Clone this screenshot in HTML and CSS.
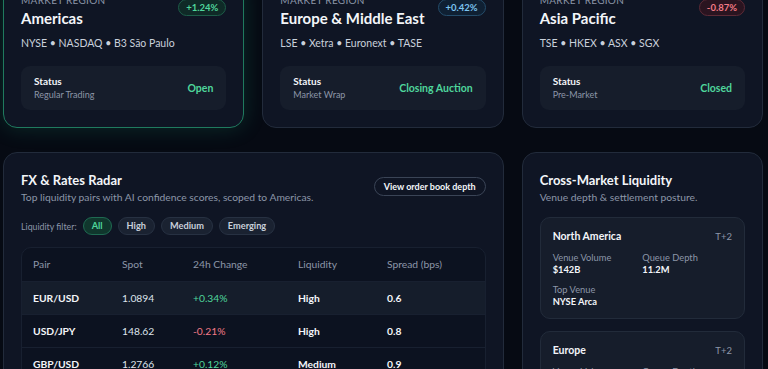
FILE: index.html
```html
<!DOCTYPE html>
<html lang="en">
<head>
    <meta charset="UTF-8" />
    <meta name="viewport" content="width=device-width, initial-scale=1" />
    <title>Global Markets Desk</title>
    <link rel="stylesheet" href="styles.css">
</head>
<body>
    <main class="page">
        <section class="regions">
            <div class="region-card active">
                <div class="region-head">
                    <div>
                        <p class="eyebrow">Market Region</p>
                        <h2 class="region-name">Americas</h2>
                    </div>
                    <span class="badge up">+1.24%</span>
                </div>
                <p class="venues">NYSE • NASDAQ • B3 São Paulo</p>
                <div class="status-box">
                    <div>
                        <div class="status-label">Status</div>
                        <div class="status-sub">Regular Trading</div>
                    </div>
                    <span class="status-value">Open</span>
                </div>
            </div>
            <div class="region-card">
                <div class="region-head">
                    <div>
                        <p class="eyebrow">Market Region</p>
                        <h2 class="region-name">Europe &amp; Middle East</h2>
                    </div>
                    <span class="badge info">+0.42%</span>
                </div>
                <p class="venues">LSE • Xetra • Euronext • TASE</p>
                <div class="status-box">
                    <div>
                        <div class="status-label">Status</div>
                        <div class="status-sub">Market Wrap</div>
                    </div>
                    <span class="status-value">Closing Auction</span>
                </div>
            </div>
            <div class="region-card">
                <div class="region-head">
                    <div>
                        <p class="eyebrow">Market Region</p>
                        <h2 class="region-name">Asia Pacific</h2>
                    </div>
                    <span class="badge down">-0.87%</span>
                </div>
                <p class="venues">TSE • HKEX • ASX • SGX</p>
                <div class="status-box">
                    <div>
                        <div class="status-label">Status</div>
                        <div class="status-sub">Pre-Market</div>
                    </div>
                    <span class="status-value">Closed</span>
                </div>
            </div>
        </section>

        <section class="lower">
            <div class="panel radar">
                <div class="panel-head">
                    <div>
                        <h3 class="panel-title">FX &amp; Rates Radar</h3>
                        <p class="panel-sub">Top liquidity pairs with AI confidence scores, scoped to Americas.</p>
                    </div>
                    <button class="btn-ghost">View order book depth</button>
                </div>
                <div class="filters">
                    <span class="filter-label">Liquidity filter:</span>
                    <button class="chip selected">All</button>
                    <button class="chip">High</button>
                    <button class="chip">Medium</button>
                    <button class="chip">Emerging</button>
                </div>
                <div class="table-wrap">
                    <table>
                        <thead>
                            <tr>
                                <th class="c-pair">Pair</th>
                                <th class="c-spot">Spot</th>
                                <th class="c-chg">24h Change</th>
                                <th class="c-liq">Liquidity</th>
                                <th>Spread (bps)</th>
                            </tr>
                        </thead>
                        <tbody>
                            <tr class="hl">
                                <td class="pair">EUR/USD</td>
                                <td>1.0894</td>
                                <td class="pos">+0.34%</td>
                                <td class="strong">High</td>
                                <td class="strong">0.6</td>
                            </tr>
                            <tr>
                                <td class="pair">USD/JPY</td>
                                <td>148.62</td>
                                <td class="neg">-0.21%</td>
                                <td class="strong">High</td>
                                <td class="strong">0.8</td>
                            </tr>
                            <tr>
                                <td class="pair">GBP/USD</td>
                                <td>1.2766</td>
                                <td class="pos">+0.12%</td>
                                <td class="strong">Medium</td>
                                <td class="strong">0.9</td>
                            </tr>
                        </tbody>
                    </table>
                </div>
            </div>

            <div class="panel liquidity">
                <h3 class="panel-title">Cross-Market Liquidity</h3>
                <p class="panel-sub">Venue depth &amp; settlement posture.</p>
                <div class="venue-card">
                    <div class="venue-head">
                        <span class="venue-name">North America</span>
                        <span class="settle">T+2</span>
                    </div>
                    <div class="stats">
                        <div>
                            <div class="stat-label">Venue Volume</div>
                            <div class="stat-value">$142B</div>
                        </div>
                        <div>
                            <div class="stat-label">Queue Depth</div>
                            <div class="stat-value">11.2M</div>
                        </div>
                        <div>
                            <div class="stat-label">Top Venue</div>
                            <div class="stat-value">NYSE Arca</div>
                        </div>
                    </div>
                </div>
                <div class="venue-card">
                    <div class="venue-head">
                        <span class="venue-name">Europe</span>
                        <span class="settle">T+2</span>
                    </div>
                    <div class="stats">
                        <div>
                            <div class="stat-label">Venue Volume</div>
                            <div class="stat-value">$118B</div>
                        </div>
                        <div>
                            <div class="stat-label">Queue Depth</div>
                            <div class="stat-value">9.4M</div>
                        </div>
                    </div>
                </div>
            </div>
        </section>
    </main>
</body>
</html>
```

FILE: styles.css
```css
:root {
    --bg: #060a13;
    --card: #0f1524;
    --card-border: #222b3b;
    --inner: #161d2b;
    --text: #f3f5f9;
    --muted: #8c96a8;
    --soft: #c9d0db;
    --green: #4fd69c;
    --red: #f27a86;
    --blue: #7cc4f0;
}
* {
    margin: 0;
    padding: 0;
    box-sizing: border-box;
    font-family: 'Lato', 'Noto Sans', sans-serif;
}
body {
    background-color: var(--bg);
    color: var(--text);
    overflow: hidden;
}
.page {
    width: 760px;
    margin: -25px 0 0 3px;
}
/* Region cards */
.regions {
    display: grid;
    grid-template-columns: repeat(3, 1fr);
    gap: 18px;
}
.region-card {
    background-color: var(--card);
    border: 1px solid var(--card-border);
    border-radius: 14px;
    padding: 17px;
}
.region-card.active {
    border-color: #1f7a5e;
    box-shadow: 0 0 22px rgba(40, 200, 150, 0.18);
}
.region-head {
    display: flex;
    justify-content: space-between;
    align-items: flex-start;
}
.eyebrow {
    font-size: 10px;
    line-height: 14px;
    letter-spacing: 0.3px;
    text-transform: uppercase;
    color: var(--muted);
}
.region-name {
    font-size: 15px;
    line-height: 22px;
    font-weight: 700;
    white-space: nowrap;
}
.badge {
    font-size: 9.5px;
    font-weight: 700;
    line-height: 13px;
    padding: 1px 7px;
    border-radius: 999px;
    border: 1px solid;
    margin-top: 6px;
}
.badge.up {
    color: var(--green);
    border-color: #1d5c48;
    background-color: #0f2a27;
}
.badge.info {
    color: var(--blue);
    border-color: #244c6a;
    background-color: #0f2033;
}
.badge.down {
    color: var(--red);
    border-color: #5c2a36;
    background-color: #2a1420;
}
.venues {
    margin-top: 7px;
    font-size: 10.5px;
    line-height: 15px;
    color: var(--soft);
}
.status-box {
    margin-top: 15px;
    background-color: var(--inner);
    border-radius: 9px;
    padding: 8px 13px;
    display: flex;
    justify-content: space-between;
    align-items: center;
}
.status-label {
    font-size: 10px;
    font-weight: 700;
    line-height: 14px;
}
.status-sub {
    font-size: 9px;
    line-height: 14px;
    color: var(--muted);
}
.status-value {
    font-size: 10.5px;
    font-weight: 700;
    color: var(--green);
}
/* Lower panels */
.lower {
    margin-top: 24px;
    display: grid;
    grid-template-columns: repeat(3, 1fr);
    gap: 18px;
    align-items: start;
}
.panel {
    background-color: var(--card);
    border: 1px solid var(--card-border);
    border-radius: 14px;
    padding: 17px 17px 20px;
}
.radar {
    grid-column: span 2;
}
.panel-head {
    display: flex;
    justify-content: space-between;
    align-items: flex-start;
}
.panel-title {
    font-size: 13px;
    font-weight: 700;
    line-height: 20px;
}
.panel-sub {
    font-size: 10.3px;
    color: var(--muted);
    line-height: 15px;
}
.btn-ghost {
    margin-top: 7px;
    background: transparent;
    color: var(--text);
    border: 1px solid #3a4456;
    border-radius: 999px;
    padding: 2px 9px;
    font-size: 9px;
    font-weight: 700;
    line-height: 13px;
}
.filters {
    margin-top: 12px;
    display: flex;
    align-items: center;
    gap: 6px;
}
.filter-label {
    font-size: 8.8px;
    color: var(--muted);
}
.chip {
    background-color: #1a2231;
    border: 1px solid #273142;
    color: var(--soft);
    border-radius: 999px;
    padding: 2px 8px;
    font-size: 9.2px;
    font-weight: 700;
    line-height: 12px;
}
.chip.selected {
    background-color: #10372d;
    border-color: #1f6a52;
    color: var(--green);
}
.table-wrap {
    margin-top: 12px;
    background-color: #0c1220;
    border: 1px solid #182030;
    border-radius: 10px;
    overflow: hidden;
}
table {
    width: 100%;
    border-collapse: collapse;
}
th, td {
    text-align: left;
    padding: 0 11px;
    height: 33px;
    font-size: 10.3px;
}
th {
    font-weight: 400;
    color: var(--muted);
}
.c-pair { width: 89px; }
.c-spot { width: 71px; }
.c-chg { width: 105px; }
.c-liq { width: 89px; }
td {
    color: #dfe4ec;
    border-top: 1px solid #182030;
}
tr.hl td {
    background-color: #151d2b;
}
td.pair, td.strong {
    font-weight: 700;
    color: var(--text);
}
td.pos { color: var(--green); }
td.neg { color: var(--red); }
/* Liquidity panel */
.venue-card {
    margin-top: 12px;
    background-color: var(--inner);
    border: 1px solid #222b3a;
    border-radius: 10px;
    padding: 11px 12px 10px;
}
.venue-card + .venue-card {
    margin-top: 12px;
}
.venue-head {
    display: flex;
    justify-content: space-between;
    align-items: center;
    line-height: 15px;
}
.venue-name {
    font-size: 10.5px;
    font-weight: 700;
}
.settle {
    font-size: 9.5px;
    color: var(--muted);
}
.stats {
    margin-top: 8px;
    display: grid;
    grid-template-columns: 1fr 1fr;
    row-gap: 8px;
}
.stat-label {
    font-size: 9.3px;
    color: var(--muted);
    line-height: 12px;
}
.stat-value {
    font-size: 9.3px;
    font-weight: 700;
    line-height: 12px;
}
```
